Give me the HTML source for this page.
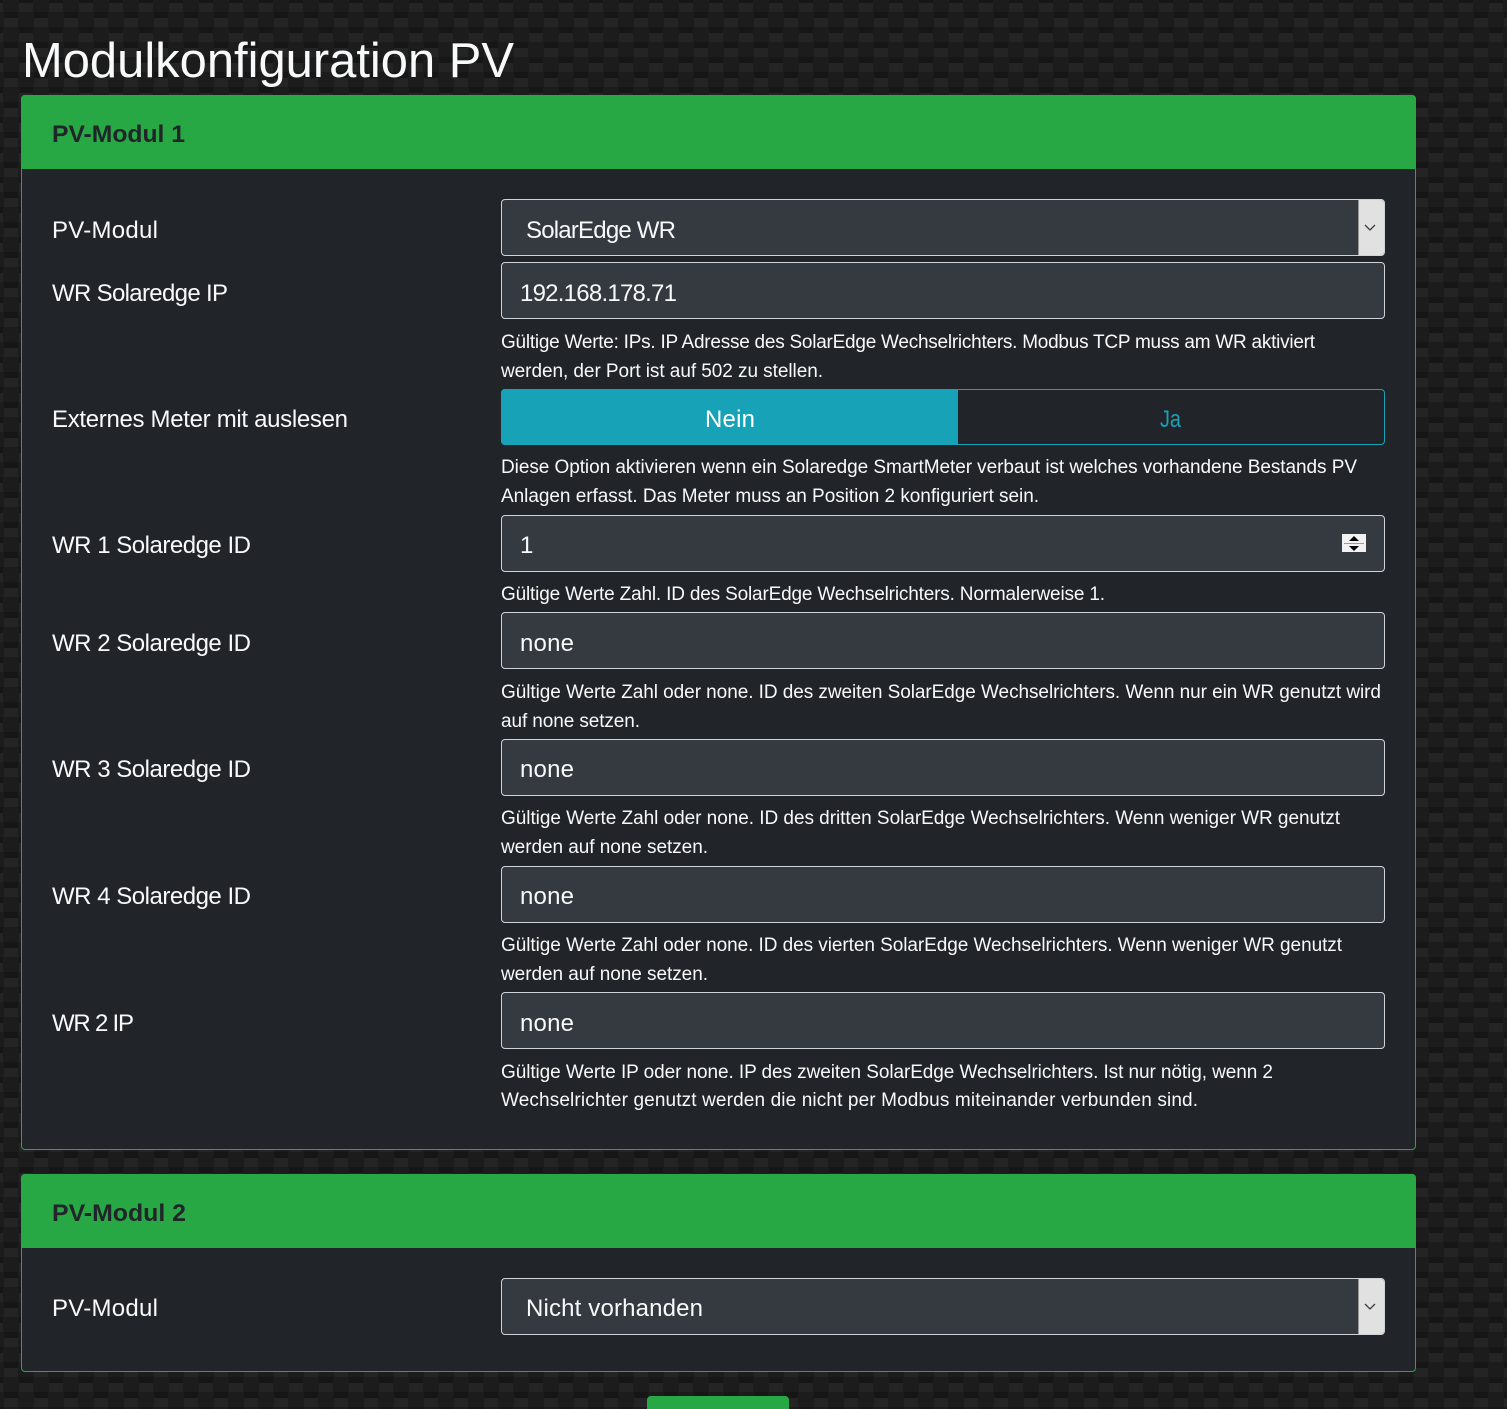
<!DOCTYPE html>
<html lang="de">
<head>
<meta charset="utf-8">
<title>Modulkonfiguration PV</title>
<style>
html,body{margin:0;padding:0;background:#1c1c1c;width:1507px;height:1409px;overflow:hidden;}
body{position:relative;}
.abs{position:absolute;box-sizing:border-box;}
.card{border:1px solid #28a745;border-radius:4px;background:#212529;}
.head{background:#28a745;border-radius:4px 4px 0 0;}
.field{background:#343a40;border:1px solid #ced4da;border-radius:4px;}
.arrow{background:#e1e1e1;border-left:1px solid #999;border-radius:0 3px 3px 0;}
svg.layer{position:absolute;left:0;top:0;}
text{font-family:"Liberation Sans",Arial,sans-serif;fill:#f8f9fa;}
.t{font-size:49px;}
.h{font-size:24.5px;font-weight:bold;fill:#212529;}
.l{font-size:24px;}
.i{font-size:24px;}
.s{font-size:19px;}
</style>
</head>
<body>
<svg class="layer" width="1507" height="1409">
<defs>
<pattern id="carbon" width="30" height="30" patternUnits="userSpaceOnUse">
<rect width="30" height="30" fill="#1c1c1c"/>
<rect x="19" y="3" width="14" height="9" fill="#242424"/>
<rect x="-11" y="3" width="14" height="9" fill="#242424"/>
<rect x="4" y="18" width="14" height="9" fill="#242424"/>
<rect x="19" y="27" width="14" height="6" fill="#161616"/>
<rect x="-11" y="27" width="14" height="6" fill="#161616"/>
<rect x="19" y="-3" width="14" height="6" fill="#161616"/>
<rect x="-11" y="-3" width="14" height="6" fill="#161616"/>
<rect x="4" y="12" width="14" height="6" fill="#161616"/>
</pattern>
</defs>
<rect width="1507" height="1409" fill="url(#carbon)"/>
</svg>

<div class="abs card" style="left:21px;top:95px;width:1395px;height:1055px;"></div>
<div class="abs head" style="left:21px;top:95px;width:1395px;height:74px;"></div>
<div class="abs card" style="left:21px;top:1174px;width:1395px;height:198px;"></div>
<div class="abs head" style="left:21px;top:1174px;width:1395px;height:74px;"></div>

<div class="abs field" style="left:501px;top:199px;width:884px;height:57px;"></div>
<div class="abs arrow" style="left:1358px;top:200px;width:26px;height:55px;"></div>
<div class="abs field" style="left:501px;top:262px;width:884px;height:57px;"></div>

<div class="abs" style="left:501px;top:389px;width:884px;height:56px;border:1px solid #17a2b8;border-radius:4px;background:#212529;"></div>
<div class="abs" style="left:501px;top:389px;width:457px;height:56px;background:#17a2b8;border-radius:4px 0 0 4px;"></div>

<div class="abs field" style="left:501px;top:515px;width:884px;height:57px;"></div>
<div class="abs field" style="left:501px;top:612px;width:884px;height:57px;"></div>
<div class="abs field" style="left:501px;top:739px;width:884px;height:57px;"></div>
<div class="abs field" style="left:501px;top:866px;width:884px;height:57px;"></div>
<div class="abs field" style="left:501px;top:992px;width:884px;height:57px;"></div>
<div class="abs field" style="left:501px;top:1278px;width:884px;height:57px;"></div>
<div class="abs arrow" style="left:1358px;top:1279px;width:26px;height:55px;"></div>

<div class="abs" style="left:647px;top:1396px;width:142px;height:13px;background:#28a745;border-radius:4px 4px 0 0;"></div>

<svg class="layer" width="1507" height="1409">
<!-- chevrons -->
<path d="M1365 225l5 5 5-5" fill="none" stroke="#3c3c3c" stroke-width="1.3"/>
<path d="M1365 1304l5 5 5-5" fill="none" stroke="#3c3c3c" stroke-width="1.3"/>
<!-- spinner -->
<rect x="1342" y="534" width="24" height="18" fill="#f2f2f2"/>
<rect x="1344" y="543" width="20" height="1" fill="#9a9a9a"/>
<path d="M1349 541h10l-5-5z" fill="#000"/>
<path d="M1349 546h10l-5 5z" fill="#000"/>

<text class="t" x="22" y="77" textLength="492" lengthAdjust="spacingAndGlyphs">Modulkonfiguration PV</text>

<text class="h" x="52" y="142" textLength="133" lengthAdjust="spacingAndGlyphs">PV-Modul 1</text>
<text class="l" x="52" y="238" textLength="106">PV-Modul</text>
<text class="i" x="526" y="238" textLength="150">SolarEdge WR</text>

<text class="l" x="52" y="301" textLength="176">WR Solaredge IP</text>
<text class="i" x="520" y="301" textLength="157">192.168.178.71</text>
<text class="s" x="501" y="348" textLength="814">Gültige Werte: IPs. IP Adresse des SolarEdge Wechselrichters. Modbus TCP muss am WR aktiviert</text>
<text class="s" x="501" y="377" textLength="322">werden, der Port ist auf 502 zu stellen.</text>

<text class="l" x="52" y="427" textLength="296">Externes Meter mit auslesen</text>
<text class="i" x="705" y="427" textLength="50" style="fill:#fff">Nein</text>
<text class="i" x="1160" y="427" textLength="21" lengthAdjust="spacingAndGlyphs" style="fill:#17a2b8">Ja</text>
<text class="s" x="501" y="473" textLength="856">Diese Option aktivieren wenn ein Solaredge SmartMeter verbaut ist welches vorhandene Bestands PV</text>
<text class="s" x="501" y="502" textLength="538">Anlagen erfasst. Das Meter muss an Position 2 konfiguriert sein.</text>

<text class="l" x="52" y="553" textLength="199">WR 1 Solaredge ID</text>
<text class="i" x="520" y="553" textLength="11">1</text>
<text class="s" x="501" y="600" textLength="604">Gültige Werte Zahl. ID des SolarEdge Wechselrichters. Normalerweise 1.</text>

<text class="l" x="52" y="651" textLength="199">WR 2 Solaredge ID</text>
<text class="i" x="520" y="651" textLength="54">none</text>
<text class="s" x="501" y="698" textLength="880">Gültige Werte Zahl oder none. ID des zweiten SolarEdge Wechselrichters. Wenn nur ein WR genutzt wird</text>
<text class="s" x="501" y="727" textLength="139">auf none setzen.</text>

<text class="l" x="52" y="777" textLength="199">WR 3 Solaredge ID</text>
<text class="i" x="520" y="777" textLength="54">none</text>
<text class="s" x="501" y="824" textLength="839">Gültige Werte Zahl oder none. ID des dritten SolarEdge Wechselrichters. Wenn weniger WR genutzt</text>
<text class="s" x="501" y="853" textLength="207">werden auf none setzen.</text>

<text class="l" x="52" y="904" textLength="199">WR 4 Solaredge ID</text>
<text class="i" x="520" y="904" textLength="54">none</text>
<text class="s" x="501" y="951" textLength="841">Gültige Werte Zahl oder none. ID des vierten SolarEdge Wechselrichters. Wenn weniger WR genutzt</text>
<text class="s" x="501" y="980" textLength="207">werden auf none setzen.</text>

<text class="l" x="52" y="1031" textLength="82">WR 2 IP</text>
<text class="i" x="520" y="1031" textLength="54">none</text>
<text class="s" x="501" y="1078" textLength="772">Gültige Werte IP oder none. IP des zweiten SolarEdge Wechselrichters. Ist nur nötig, wenn 2</text>
<text class="s" x="501" y="1106" textLength="697">Wechselrichter genutzt werden die nicht per Modbus miteinander verbunden sind.</text>

<text class="h" x="52" y="1221" textLength="134" lengthAdjust="spacingAndGlyphs">PV-Modul 2</text>
<text class="l" x="52" y="1316" textLength="106">PV-Modul</text>
<text class="i" x="526" y="1316" textLength="177">Nicht vorhanden</text>
</svg>
</body>
</html>
